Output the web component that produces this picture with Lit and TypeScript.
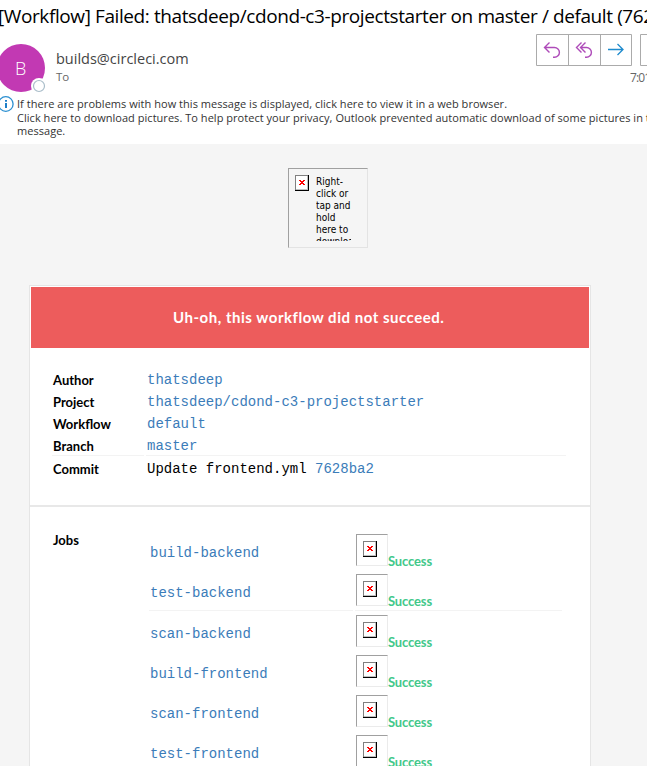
import { LitElement, html, css } from "lit";
import { customElement, property } from "lit/decorators.js";

@customElement("blocked-icon")
class BlockedIcon extends LitElement {
  static styles = css`
    :host { display: block; width: 14px; height: 16px; flex: none; }
    svg { display: block; }
  `;
  render() {
    return html`<svg width="14" height="16" viewBox="0 0 14 16" shape-rendering="crispEdges">
      <rect width="14" height="16" fill="#808080"></rect>
      <rect x="13" width="1" height="16" fill="#000"></rect>
      <rect x="0" y="15" width="14" height="1" fill="#000"></rect>
      <rect x="1" y="1" width="12" height="14" fill="#c0c0c0"></rect>
      <rect x="1" y="1" width="11" height="13" fill="#fff"></rect>
      <path d="M4 5h2v1h2v-1h2v1h-1v1h-1v1h1v1h1v1h-2v-1h-2v1h-2v-1h1v-1h1v-1h-1v-1h-1z" fill="#f00"></path>
    </svg>`;
  }
}

@customElement("message-header")
class MessageHeader extends LitElement {
  static styles = css`
    :host {
      display: flex; flex-direction: column; height: 144px; overflow: hidden;
      background: #fff; color: #444; font-family: "Open Sans", "Noto Sans", sans-serif;
      white-space: nowrap;
    }
    .subject { height: 34px; line-height: 33px; font-size: 19px; color: #000; margin-left: -2px; letter-spacing: -0.405px; }
    .sender { display: flex; height: 61px; }
    .avatar { margin: 9px 0 0 -3px; width: 51px; height: 52px; flex: none; }
    .avatar svg { display: block; }
    .initial { font-size: 18px; font-weight: 300; }
    .who { flex: 1; margin-left: 8px; padding-top: 14px; }
    .from { font-size: 14.5px; line-height: 22px; height: 20px; }
    .to { font-size: 11.5px; line-height: 18px; color: #666; }
    .side { width: 111px; flex: none; }
    .actions { display: flex; }
    .actions svg { display: block; }
    .time { font-size: 12px; line-height: 18px; color: #666; margin: 2px 0 0 94px; letter-spacing: -0.9px; }
    .info { display: flex; font-size: 11px; color: #333; }
    .info svg { flex: none; width: 17px; height: 18px; }
    .line { height: 13.5px; line-height: 18px; letter-spacing: 0.035px; }
  `;
  render() {
    return html`
      <div class="subject">[Workflow] Failed: thatsdeep/cdond-c3-projectstarter on master / default (7628ba2)</div>
      <div class="sender">
        <div class="avatar">
          <svg width="51" height="52" viewBox="-3 43 51 52">
            <circle cx="21" cy="68" r="24" fill="#c239b3"></circle>
            <text class="initial" x="20.7" y="75" text-anchor="middle" fill="#fff">B</text>
            <circle cx="39" cy="86" r="8" fill="#fff"></circle>
            <circle cx="39" cy="86" r="5.5" fill="#fff" stroke="#a9bdc9" stroke-width="1.2"></circle>
          </svg>
        </div>
        <div class="who">
          <div class="from">builds@circleci.com</div>
          <div class="to">To</div>
        </div>
        <div class="side">
          <div class="actions">
            <svg width="111" height="33" viewBox="536 34 111 33" fill="none">
              <path d="M536.5 34.5h95v31h-95zM568.5 34.5v31M600.5 34.5v31M655 34.5h-14.5v31h14.5" stroke="#ababab"></path>
              <path d="M549.5 42.5l-5 5 5 5M544.5 47.5h10a4.9 4.9 0 0 1 0 9.8h-1.5" stroke="#ae4bb9" stroke-width="1.4"></path>
              <path d="M581.5 42.5l-5 5 5 5M585.5 42.5l-5 5 5 5M580.5 47.5h6a4.9 4.9 0 0 1 0 9.8h-1.5" stroke="#ae4bb9" stroke-width="1.4"></path>
              <path d="M608 49.5h15M617.5 44l5.5 5.5-5.5 5.5" stroke="#1e8bcd" stroke-width="1.3"></path>
            </svg>
          </div>
          <div class="time">7:01 PM</div>
        </div>
      </div>
      <div class="info">
        <svg viewBox="0 95 17 18">
          <circle cx="5.8" cy="104" r="7.3" fill="#fff" stroke="#2b8fd0" stroke-width="1.3"></circle>
          <path d="M5 100h2v1.8h-2zM5 103h2v5h-2z" fill="#1e7fc8"></path>
        </svg>
        <div>
          <div class="line">If there are problems with how this message is displayed, click here to view it in a web browser.</div>
          <div class="line">Click here to download pictures. To help protect your privacy, Outlook prevented automatic download of some pictures in this</div>
          <div class="line">message.</div>
        </div>
      </div>`;
  }
}

@customElement("job-row")
class JobRow extends LitElement {
  @property() name = "";
  @property() status = "";
  static styles = css`
    :host { display: flex; height: 40px; }
    .name {
      width: 207px; padding-left: 1px; box-sizing: border-box; color: #3b7cb9;
      font: 14px/38px "Liberation Mono", monospace;
    }
    .pic {
      width: 32px; height: 32px; box-sizing: border-box; flex: none;
      border: 1px solid; border-color: #a0a0a0 #ebebeb #ebebeb #a0a0a0; padding: 6px;
    }
    .status {
      font: bold 13px/20px Lato, sans-serif; color: #42c88a; padding-top: 17px; letter-spacing: -0.15px;
    }
  `;
  render() {
    return html`<div class="name">${this.name}</div>
      <div class="pic"><blocked-icon></blocked-icon></div>
      <div class="status">${this.status}</div>`;
  }
}

const DETAILS = [
  { label: "Author", link: "thatsdeep" },
  { label: "Project", link: "thatsdeep/cdond-c3-projectstarter" },
  { label: "Workflow", link: "default" },
  { label: "Branch", link: "master" },
];
const JOBS = [
  ["build-backend", "test-backend"],
  ["scan-backend", "build-frontend", "scan-frontend", "test-frontend"],
];

@customElement("app-root")
class AppRoot extends LitElement {
  static styles = css`
    :host { display: block; width: 647px; height: 766px; overflow: hidden; background: #f5f5f5; }
    .logo {
      width: 80px; height: 80px; box-sizing: border-box; margin: 24px 0 37px 288px; display: flex;
      border: 1px solid; border-color: #a0a0a0 #e3e3e3 #e3e3e3 #a0a0a0; padding: 6px;
    }
    .alt {
      margin-left: 7px; width: 35px; height: 66px; padding-top: 1px; box-sizing: border-box;
      overflow: hidden; white-space: nowrap; color: #000;
      font: 10px/12px "DejaVu Sans Condensed", "DejaVu Sans", sans-serif; font-stretch: condensed;
    }
    .card { width: 562px; height: 500px; box-sizing: border-box; margin-left: 29px; background: #fff; border: 1px solid #e5e5e5; }
    .banner {
      margin: 1px 1px 0; height: 61px; box-sizing: border-box; padding-left: 142px;
      background: #ed5c5c; color: #fff; font: bold 15px/61px Lato, sans-serif; letter-spacing: 0.52px;
    }
    .details { height: 159px; box-sizing: border-box; padding: 22px 24px 0 22px; border-bottom: 2px solid #e8e8e8; }
    .row { display: grid; grid-template-columns: 94px 1fr; height: 22px; }
    .label { font: bold 13px/20px Lato, sans-serif; color: #000; padding-left: 1px; }
    .value { font: 14px/20px "Liberation Mono", monospace; color: #000; padding-left: 1px; }
    .link { color: #3b7cb9; }
    .rule { display: grid; gap: 2px; height: 1px; }
    .rule i { background: #f3f3f3; }
    .r1 { grid-template-columns: 92px 420px; margin-top: -3px; margin-bottom: 3px; }
    .jobs { display: grid; grid-template-columns: 97px 1fr; padding: 27px 0 0 22px; }
    .jobs .label { margin-top: -4px; }
    .r2 { grid-template-columns: 204px 207px; margin-top: -4px; margin-bottom: 4px; }
  `;
  render() {
    return html`
      <message-header></message-header>
      <div class="logo">
        <blocked-icon></blocked-icon>
        <div class="alt">Right-<br />click or<br />tap and<br />hold<br />here to<br />download</div>
      </div>
      <div class="card">
        <div class="banner">Uh-oh, this workflow did not succeed.</div>
        <div class="details">
          ${DETAILS.map((d) => html`<div class="row"><div class="label">${d.label}</div><div class="value link">${d.link}</div></div>`)}
          <div class="rule r1"><i></i><i></i></div>
          <div class="row"><div class="label">Commit</div><div class="value">Update frontend.yml <span class="link">7628ba2</span></div></div>
        </div>
        <div class="jobs">
          <div class="label">Jobs</div>
          <div>
            ${JOBS.map((group, i) => html`${i ? html`<div class="rule r2"><i></i><i></i></div>` : ""}
              ${group.map((name) => html`<job-row .name=${name} .status=${"Success"}></job-row>`)}`)}
          </div>
        </div>
      </div>`;
  }
}
